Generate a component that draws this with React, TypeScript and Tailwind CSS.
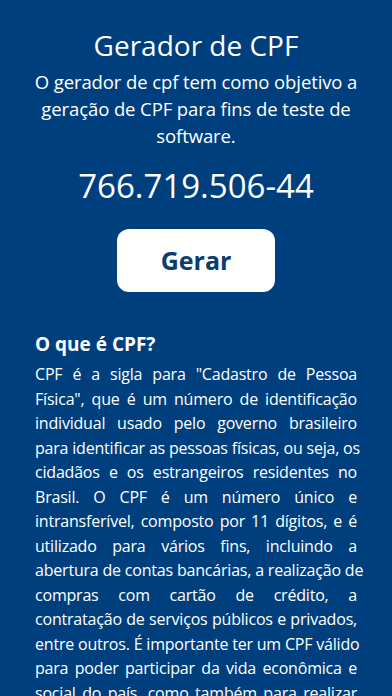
import React from "react";

const bodyLines = [
  'CPF é a sigla para "Cadastro de Pessoa',
  'Física", que é um número de identificação',
  "individual usado pelo governo brasileiro",
  "para identificar as pessoas físicas, ou seja, os",
  "cidadãos e os estrangeiros residentes no",
  "Brasil. O CPF é um número único e",
  "intransferível, composto por 11 dígitos, e é",
  "utilizado para vários fins, incluindo a",
  "abertura de contas bancárias, a realização de",
  "compras com cartão de crédito, a",
  "contratação de serviços públicos e privados,",
  "entre outros. É importante ter um CPF válido",
  "para poder participar da vida econômica e",
  "social do país, como também para realizar",
];

export default function App() {
  return (
    <div
      className="w-[392px] h-[696px] overflow-hidden bg-[#003f7e] text-white flex flex-col items-center"
      style={{ fontFamily: '"Open Sans", "Noto Sans", sans-serif' }}
    >
      <h1 className="shrink-0 mt-[27px] text-[28px] leading-[36px] font-normal text-center">Gerador de CPF</h1>
      <p className="shrink-0 mt-[5px] text-[18.5px] leading-[27px] text-center tracking-[-0.1px] whitespace-nowrap">
        O gerador de cpf tem como objetivo a<br />
        geração de CPF para fins de teste de<br />
        software.
      </p>
      <div className="shrink-0 mt-[17px] text-[33px] leading-[40px] text-center">766.719.506-44</div>
      <button className="shrink-0 mt-[23px] w-[158px] h-[63px] rounded-[12px] bg-white text-[#0b3d73] text-[25px] font-bold flex items-center justify-center">
        Gerar
      </button>
      <div className="shrink-0 w-full px-[35px] mt-[39px]">
        <h2 className="text-[19px] leading-[26px] font-bold">O que é CPF?</h2>
        <p className="mt-[5px] text-[16px] leading-[24.5px] tracking-[-0.2px] text-justify">
          {bodyLines.map((l, i) => (
            <span key={i} className="block [text-align-last:justify] whitespace-nowrap">
              {l}
            </span>
          ))}
        </p>
      </div>
    </div>
  );
}
